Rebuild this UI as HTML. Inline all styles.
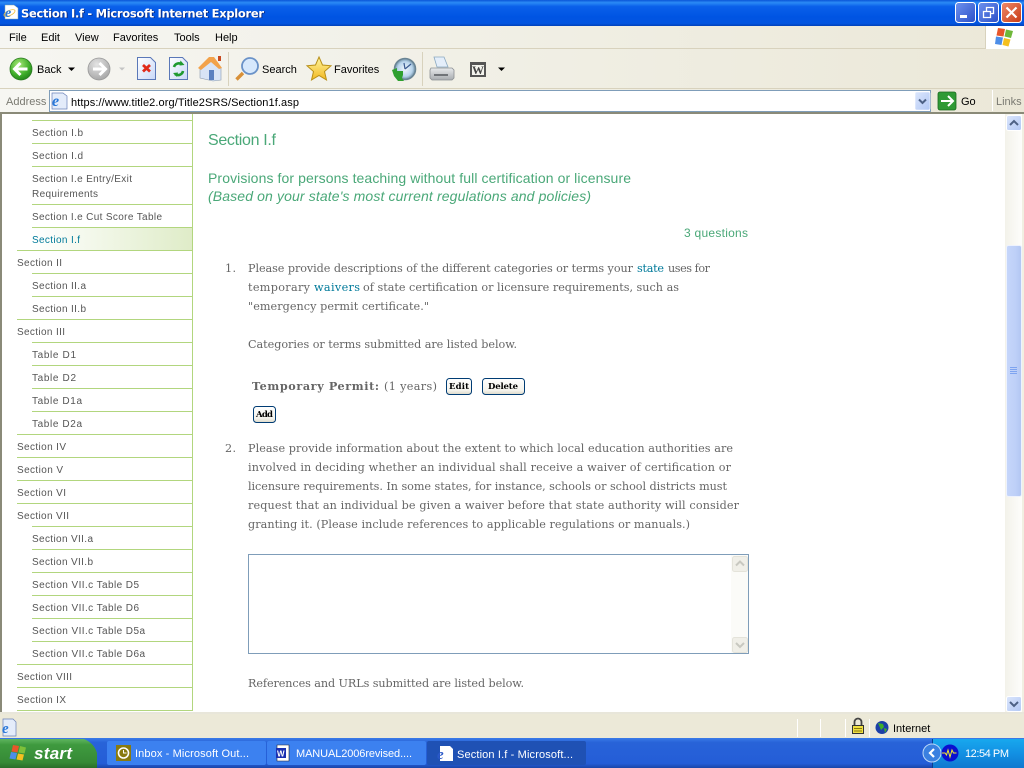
<!DOCTYPE html>
<html><head><meta charset="utf-8"><title>Section I.f - Microsoft Internet Explorer</title>
<style>
html,body{margin:0;padding:0;width:1024px;height:768px;overflow:hidden;background:#fff}
svg{display:block}
text{white-space:pre}
.s{font:11px "Liberation Sans",sans-serif;fill:#000}
.g{font-family:"Liberation Sans",sans-serif;fill:#4aa878}
</style></head><body>
<svg width="1024" height="768" viewBox="0 0 1024 768" xmlns="http://www.w3.org/2000/svg">
<defs>
<linearGradient id="tb" x1="0" y1="0" x2="0" y2="1"><stop offset="0" stop-color="#0a55d8"/><stop offset=".1" stop-color="#2b8bf5"/><stop offset=".25" stop-color="#0a60ea"/><stop offset=".65" stop-color="#0054e3"/><stop offset=".9" stop-color="#0355e0"/><stop offset="1" stop-color="#0241b8"/></linearGradient>
<linearGradient id="mn" x1="0" y1="0" x2="1" y2="0"><stop offset="0" stop-color="#f6f6f2"/><stop offset="1" stop-color="#ebe8d8"/></linearGradient>
<linearGradient id="task" x1="0" y1="0" x2="0" y2="1"><stop offset="0" stop-color="#3a7be8"/><stop offset=".15" stop-color="#2863d8"/><stop offset=".85" stop-color="#245dd7"/><stop offset="1" stop-color="#1a45a8"/></linearGradient>
<linearGradient id="st" x1="0" y1="0" x2="0" y2="1"><stop offset="0" stop-color="#5fb55f"/><stop offset=".2" stop-color="#3f9a3f"/><stop offset=".8" stop-color="#368a36"/><stop offset="1" stop-color="#2a6e2a"/></linearGradient>
<linearGradient id="tray" x1="0" y1="0" x2="0" y2="1"><stop offset="0" stop-color="#18a8ee"/><stop offset=".5" stop-color="#1290e3"/><stop offset="1" stop-color="#0f78cf"/></linearGradient>
<linearGradient id="act" x1="0" y1="0" x2="1" y2="0"><stop offset="0" stop-color="#fff"/><stop offset="1" stop-color="#dfecc8"/></linearGradient>
<linearGradient id="sb" x1="0" y1="0" x2="1" y2="0"><stop offset="0" stop-color="#f3f2ea"/><stop offset="1" stop-color="#fdfdfb"/></linearGradient>
<linearGradient id="th" x1="0" y1="0" x2="1" y2="0"><stop offset="0" stop-color="#c6d6fa"/><stop offset=".6" stop-color="#bed0f8"/><stop offset="1" stop-color="#b2c6f2"/></linearGradient>
<linearGradient id="btn" x1="0" y1="0" x2="0" y2="1"><stop offset="0" stop-color="#fff"/><stop offset=".75" stop-color="#f4f3ec"/><stop offset="1" stop-color="#dcd8c8"/></linearGradient>
<linearGradient id="wb" x1="0" y1="0" x2="1" y2="1"><stop offset="0" stop-color="#6f92ee"/><stop offset="1" stop-color="#2a4fc8"/></linearGradient>
<linearGradient id="wr" x1="0" y1="0" x2="1" y2="1"><stop offset="0" stop-color="#ee8a6a"/><stop offset="1" stop-color="#c83a14"/></linearGradient>
<radialGradient id="grn" cx=".4" cy=".3" r=".8"><stop offset="0" stop-color="#a8e878"/><stop offset=".6" stop-color="#3fae2a"/><stop offset="1" stop-color="#1c7a18"/></radialGradient>
<radialGradient id="gry" cx=".4" cy=".3" r=".8"><stop offset="0" stop-color="#e4e4e4"/><stop offset="1" stop-color="#a0a0a0"/></radialGradient>
<linearGradient id="sc" x1="0" y1="0" x2="1" y2="1"><stop offset="0" stop-color="#dbe6fc"/><stop offset="1" stop-color="#b2c8f5"/></linearGradient>
<linearGradient id="doc" x1="0" y1="0" x2="1" y2="1"><stop offset="0" stop-color="#ffffff"/><stop offset="1" stop-color="#c8d8f8"/></linearGradient>
<linearGradient id="star" x1="0" y1="0" x2="0" y2="1"><stop offset="0" stop-color="#fff6a0"/><stop offset="1" stop-color="#f2b820"/></linearGradient>
<linearGradient id="prn" x1="0" y1="0" x2="0" y2="1"><stop offset="0" stop-color="#e8eaec"/><stop offset="1" stop-color="#a8acb0"/></linearGradient>
<radialGradient id="clk" cx=".5" cy=".5" r=".5"><stop offset="0" stop-color="#f0f6fc"/><stop offset=".7" stop-color="#b8d4ec"/><stop offset="1" stop-color="#6a8aa0"/></radialGradient>
</defs>

<!-- title bar -->
<rect width="1024" height="26" fill="url(#tb)"/>
<path d="M5 5h9l4 3v11H5z" fill="#fff" stroke="#8aa" stroke-width=".5"/>
<ellipse cx="9.500" cy="13" rx="6" ry="2.500" fill="none" stroke="#f0c040" stroke-width=".8" transform="rotate(-25 9.500 13)"/>
<text x="5" y="17" font-family="Liberation Serif" font-style="italic" font-weight="bold" font-size="14" fill="#2a78d8">e</text>
<text x="22" y="18" font-family="DejaVu Sans" font-weight="bold" font-size="11.500" fill="#0a2a80" textLength="243">Section I.f - Microsoft Internet Explorer</text>
<text x="21" y="17.500" font-family="DejaVu Sans" font-weight="bold" font-size="11.500" fill="#fff" textLength="243">Section I.f - Microsoft Internet Explorer</text>
<g stroke="#fff" stroke-width="1">
<rect x="955.500" y="2.500" width="20" height="20" rx="3" fill="url(#wb)"/>
<rect x="978.500" y="2.500" width="20" height="20" rx="3" fill="url(#wb)"/>
<rect x="1001.500" y="2.500" width="20" height="20" rx="3" fill="url(#wr)"/>
</g>
<rect x="960" y="15" width="7" height="3" fill="#fff"/>
<path d="M983.500 11.500h7v6h-7zM986.500 11v-3.500h7v6h-3" fill="none" stroke="#fff" stroke-width="1.300"/>
<path d="M1006.500 7.500l10 10M1016.500 7.500l-10 10" stroke="#fff" stroke-width="2.200"/>

<!-- menu -->
<rect y="26" width="1024" height="23" fill="url(#mn)"/>
<rect y="48" width="985" height="1" fill="#d8d2bd"/>
<rect x="985" y="26" width="39" height="23" fill="#fff"/>
<rect x="985" y="26" width="1" height="23" fill="#d8d2bd"/>
<path d="M998 28l7 1-1.500 7.500-7-1z" fill="#e8562a"/><path d="M1006 29.500l7 1.500-2 7-6.500-1.500z" fill="#6fb83a"/><path d="M996 36.500l7 1-1.500 7.500-6.500-1z" fill="#4d8ee8"/><path d="M1004 38l6.500 1.500-2 7-6-1.500z" fill="#f5c020"/>
<text class="s" x="9" y="41">File</text>
<text class="s" x="41" y="41">Edit</text>
<text class="s" x="75" y="41">View</text>
<text class="s" x="113" y="41">Favorites</text>
<text class="s" x="174" y="41">Tools</text>
<text class="s" x="215" y="41">Help</text>

<!-- toolbar -->
<rect y="49" width="1024" height="40" fill="url(#mn)"/>
<rect y="88" width="1024" height="1" fill="#d8d2bd"/>
<circle cx="21" cy="69" r="11" fill="url(#grn)" stroke="#2a7a20" stroke-width=".8"/>
<path d="M27.500 69H15M20.500 63l-6 6 6 6" fill="none" stroke="#fff" stroke-width="3"/>
<text class="s" x="37" y="73">Back</text>
<path d="M68 67.500h7l-3.500 3.500z" fill="#000"/>
<circle cx="99" cy="69" r="11" fill="url(#gry)" stroke="#999" stroke-width=".8"/>
<path d="M93 69h12M99.500 63l6 6-6 6" fill="none" stroke="#fff" stroke-width="3"/>
<path d="M119 67.500h6l-3 3z" fill="#c4c4c4"/>
<path d="M137.500 57.500h13l5 5v17h-18z" fill="url(#doc)" stroke="#5a78b8"/>
<path d="M143 65l7 6.500M150 65l-7 6.500" stroke="#e02a1a" stroke-width="2.800"/>
<path d="M169.500 57.500h13l5 5v17h-18z" fill="url(#doc)" stroke="#5a78b8"/>
<path d="M174 67a5 5 0 0 1 8-2.500M183 71a5 5 0 0 1-8 3" fill="none" stroke="#1f9a30" stroke-width="2.600"/>
<path d="M180.500 60.500l4 4.500-5 .5zM177 77l-4-4 5-.5z" fill="#1f9a30"/>
<path d="M200 68l10-9 11 9v12l-8 1-13-3z" fill="#d8e4f6" stroke="#8a9ab0" stroke-width=".6"/>
<path d="M198 68l11-11 5 0 8 11-3 1-8-7-10 8z" fill="#f2a24a"/>
<rect x="218" y="56" width="3" height="5" fill="#c84a20"/>
<rect x="209" y="70" width="5" height="10" fill="#5a80c0"/>
<rect x="228" y="52" width="1" height="34" fill="#d8d2bd"/>
<circle cx="250" cy="66" r="8" fill="#d6e8fc" stroke="#6a92c8" stroke-width="1.800"/>
<path d="M243 73l-6.500 6.500" stroke="#d89038" stroke-width="3.400"/>
<text class="s" x="262" y="73">Search</text>
<path d="M319 57l3.500 8 8.500.8-6.500 5.700 2 8.500-7.500-4.500-7.500 4.500 2-8.500-6.500-5.700 8.500-.8z" fill="url(#star)" stroke="#b89018" stroke-width="1"/>
<text class="s" x="334" y="73">Favorites</text>
<circle cx="405" cy="69" r="10.500" fill="url(#clk)" stroke="#6a8494" stroke-width="1.600"/>
<path d="M405 69l6-5M405 69l-1-6" stroke="#3a5a90" stroke-width="1.200"/>
<path d="M392 70l5-2 0 3h6v4l-1 3 2 3-6 0-4-5z" fill="#2fa030"/>
<rect x="422" y="52" width="1" height="34" fill="#d8d2bd"/>
<path d="M434 57h10l4 10h-11z" fill="#e4eefa" stroke="#8aa8c0" stroke-width=".8"/>
<path d="M431 68h21l2 2v8l-2 2h-20l-2-2v-8z" fill="url(#prn)" stroke="#8a8e92" stroke-width=".8"/>
<rect x="434" y="74" width="14" height="2" fill="#707478"/>
<rect x="470" y="62" width="16" height="15" fill="#555"/>
<rect x="472" y="65" width="12" height="10" fill="#f4f4ee"/>
<text x="472" y="74" font-family="Liberation Serif" font-weight="bold" font-size="12" fill="#444" textLength="12">W</text>
<path d="M498 67.500h7l-3.500 3.500z" fill="#000"/>

<!-- address bar -->
<rect y="89" width="1024" height="24" fill="url(#mn)"/>
<text x="6" y="105" font-family="Liberation Sans" font-size="11" fill="#7a7a72">Address</text>
<rect x="49.500" y="90.500" width="881" height="21" fill="#fff" stroke="#7f9db9"/>
<path d="M52 93h11l4 3v13H52z" fill="#e4ecfa" stroke="#6a80b8" stroke-width=".7"/>
<text x="52" y="106" font-family="Liberation Serif" font-style="italic" font-weight="bold" font-size="16" fill="#2a78d8">e</text>
<text x="71" y="106" font-family="Liberation Sans" font-size="11" fill="#000" textLength="228">https://www.title2.org/Title2SRS/Section1f.asp</text>
<rect x="915" y="92" width="15" height="18" rx="1.500" fill="url(#sc)" stroke="#fff" stroke-width=".6"/>
<path d="M919 99.500l3.500 3.500 3.500-3.500" fill="none" stroke="#4d6185" stroke-width="2"/>
<rect x="938" y="92" width="18" height="18" rx="2" fill="#2f9a35" stroke="#1c6a20" stroke-width=".8"/>
<path d="M941 101h11M948 96l5 5-5 5" fill="none" stroke="#fff" stroke-width="2"/>
<text class="s" x="961" y="105">Go</text>
<rect x="992" y="90" width="1" height="21" fill="#fff"/>
<text x="996" y="105" font-family="Liberation Sans" font-size="11" fill="#7a7a72">Links</text>

<!-- content -->
<rect x="0" y="112" width="1024" height="602" fill="#fff"/>
<rect x="0" y="112" width="1024" height="2" fill="#8a8a78"/>
<rect x="0" y="112" width="2" height="602" fill="#8a8a78"/>
<rect x="0" y="712" width="1024" height="2" fill="#e8e6da"/>

<!-- sidebar -->
<rect x="32" y="228" width="160" height="22" fill="url(#act)"/>
<g fill="#b2d67e">
<rect x="192" y="114" width="1" height="597"/>
<rect x="32" y="120" width="160" height="1"/><rect x="32" y="143" width="160" height="1"/><rect x="32" y="166" width="160" height="1"/><rect x="32" y="204" width="160" height="1"/><rect x="32" y="227" width="160" height="1"/>
<rect x="17" y="250" width="175" height="1"/><rect x="32" y="273" width="160" height="1"/><rect x="32" y="296" width="160" height="1"/>
<rect x="17" y="319" width="175" height="1"/><rect x="32" y="342" width="160" height="1"/><rect x="32" y="365" width="160" height="1"/><rect x="32" y="388" width="160" height="1"/><rect x="32" y="411" width="160" height="1"/>
<rect x="17" y="434" width="175" height="1"/><rect x="17" y="457" width="175" height="1"/><rect x="17" y="480" width="175" height="1"/><rect x="17" y="503" width="175" height="1"/>
<rect x="32" y="526" width="160" height="1"/><rect x="32" y="549" width="160" height="1"/><rect x="32" y="572" width="160" height="1"/><rect x="32" y="595" width="160" height="1"/><rect x="32" y="618" width="160" height="1"/><rect x="32" y="641" width="160" height="1"/>
<rect x="17" y="664" width="175" height="1"/><rect x="17" y="687" width="175" height="1"/><rect x="17" y="710" width="175" height="1"/>
</g>
<g font-family="Liberation Sans" font-size="10" fill="#555">
<text x="32" y="136" textLength="51">Section I.b</text>
<text x="32" y="159" textLength="51">Section I.d</text>
<text x="32" y="182" textLength="100">Section I.e Entry/Exit</text>
<text x="32" y="197" textLength="66">Requirements</text>
<text x="32" y="220" textLength="130">Section I.e Cut Score Table</text>
<text x="32" y="243" textLength="48" fill="#007a9a">Section I.f</text>
<text x="17" y="266" textLength="45">Section II</text>
<text x="32" y="289" textLength="54">Section II.a</text>
<text x="32" y="312" textLength="54">Section II.b</text>
<text x="17" y="335" textLength="48">Section III</text>
<text x="32" y="358" textLength="44">Table D1</text>
<text x="32" y="381" textLength="44">Table D2</text>
<text x="32" y="404" textLength="50">Table D1a</text>
<text x="32" y="427" textLength="50">Table D2a</text>
<text x="17" y="450" textLength="49">Section IV</text>
<text x="17" y="473" textLength="46">Section V</text>
<text x="17" y="496" textLength="49">Section VI</text>
<text x="17" y="519" textLength="52">Section VII</text>
<text x="32" y="542" textLength="61">Section VII.a</text>
<text x="32" y="565" textLength="61">Section VII.b</text>
<text x="32" y="588" textLength="107">Section VII.c Table D5</text>
<text x="32" y="611" textLength="107">Section VII.c Table D6</text>
<text x="32" y="634" textLength="113">Section VII.c Table D5a</text>
<text x="32" y="657" textLength="113">Section VII.c Table D6a</text>
<text x="17" y="680" textLength="55">Section VIII</text>
<text x="17" y="703" textLength="49">Section IX</text>
</g>

<!-- main text -->
<text class="g" x="208" y="145" font-size="16" textLength="68">Section I.f</text>
<text class="g" x="208" y="183" font-size="14" textLength="423">Provisions for persons teaching without full certification or licensure</text>
<text class="g" x="208" y="201" font-size="14" font-style="italic" textLength="383">(Based on your state's most current regulations and policies)</text>
<text class="g" x="684" y="237" font-size="12" textLength="64">3 questions</text>

<g font-family="DejaVu Serif" font-size="11.200" fill="#666">
<text x="225" y="272" textLength="11">1.</text>
<text x="248" y="272" textLength="385">Please provide descriptions of the different categories or terms your</text>
<text x="637" y="272" textLength="27" fill="#007a9a">state</text>
<text x="668" y="272" textLength="42">uses for</text>
<text x="248" y="291" textLength="62">temporary</text>
<text x="314" y="291" textLength="46" fill="#007a9a">waivers</text>
<text x="363" y="291" textLength="316">of state certification or licensure requirements, such as</text>
<text x="248" y="310" textLength="181">"emergency permit certificate."</text>
<text x="248" y="348" textLength="269">Categories or terms submitted are listed below.</text>
<text x="252" y="390" textLength="127" font-weight="bold">Temporary Permit:</text>
<text x="384" y="390" textLength="53">(1 years)</text>
<text x="225" y="452" textLength="11">2.</text>
<text x="248" y="452" textLength="485">Please provide information about the extent to which local education authorities are</text>
<text x="248" y="471" textLength="483">involved in deciding whether an individual shall receive a waiver of certification or</text>
<text x="248" y="490" textLength="479">licensure requirements. In some states, for instance, schools or school districts must</text>
<text x="248" y="509" textLength="491">request that an individual be given a waiver before that state authority will consider</text>
<text x="248" y="528" textLength="442">granting it. (Please include references to applicable regulations or manuals.)</text>
<text x="248" y="687" textLength="276">References and URLs submitted are listed below.</text>
</g>

<!-- buttons -->
<g fill="url(#btn)" stroke="#003c74" stroke-width="1">
<rect x="446.500" y="378.500" width="25" height="16" rx="3"/>
<rect x="482.500" y="378.500" width="42" height="16" rx="3"/>
<rect x="253.500" y="406.500" width="22" height="16" rx="3"/>
</g>
<g font-family="DejaVu Serif" font-size="8.500" font-weight="bold" fill="#000">
<text x="449" y="389" textLength="20">Edit</text>
<text x="488" y="389" textLength="30">Delete</text>
<text x="256" y="417" textLength="17">Add</text>
</g>

<!-- textarea -->
<rect x="248.500" y="554.500" width="500" height="99" fill="#fff" stroke="#7f9db9"/>
<rect x="731" y="555" width="17" height="98" fill="#fbfbf8"/>
<rect x="732.500" y="556.500" width="15" height="15" rx="2" fill="#f0efe8" stroke="#e4e3da"/>
<path d="M736 565.500l4-4 4 4" fill="none" stroke="#c8c8c0" stroke-width="2"/>
<rect x="732.500" y="637.500" width="15" height="15" rx="2" fill="#f0efe8" stroke="#e4e3da"/>
<path d="M736 643l4 4 4-4" fill="none" stroke="#c8c8c0" stroke-width="2"/>

<!-- page scrollbar -->
<rect x="1005" y="114" width="17" height="598" fill="url(#sb)"/>
<rect x="1022" y="114" width="2" height="598" fill="#f1efe2"/>
<rect x="1006.500" y="115.500" width="15" height="15" rx="2" fill="url(#sc)" stroke="#fff"/>
<path d="M1010 125l4-4 4 4" fill="none" stroke="#4d6185" stroke-width="2"/>
<rect x="1006.500" y="696.500" width="15" height="15" rx="2" fill="url(#sc)" stroke="#fff"/>
<path d="M1010 702l4 4 4-4" fill="none" stroke="#4d6185" stroke-width="2"/>
<rect x="1006.500" y="245.500" width="15" height="251" rx="2" fill="url(#th)" stroke="#eef2fd"/>
<g fill="#7ea4f0"><rect x="1010" y="367" width="7" height="1"/><rect x="1010" y="369" width="7" height="1"/><rect x="1010" y="371" width="7" height="1"/><rect x="1010" y="373" width="7" height="1"/></g>

<!-- status bar -->
<rect y="714" width="1024" height="27" fill="#ece9d8"/>
<path d="M3 719h10l3 3v14H3z" fill="#e4ecfa" stroke="#6a80b8" stroke-width=".7"/>
<text x="2" y="733" font-family="Liberation Serif" font-style="italic" font-weight="bold" font-size="15" fill="#2a78d8">e</text>
<g fill="#fff"><rect x="797" y="719" width="1" height="18"/><rect x="820" y="719" width="1" height="18"/><rect x="845" y="719" width="1" height="18"/><rect x="869" y="719" width="1" height="18"/></g>
<path d="M854.500 726v-4a3.500 3.500 0 0 1 7 0v4" fill="none" stroke="#444" stroke-width="1.800"/>
<rect x="852.500" y="725.500" width="11" height="8" fill="#f0e040" stroke="#333"/>
<path d="M854 728.500h8M854 731h8" stroke="#887a10"/>
<circle cx="882" cy="727.500" r="6.500" fill="#1c3fa8"/><path d="M878 723l5 1 1 3-3 3zM884 728l3 1-2 4z" fill="#3fae2a"/>
<text class="s" x="893" y="732">Internet</text>

<!-- taskbar -->
<rect y="738" width="1024" height="30" fill="url(#task)"/>
<path d="M0 739h84q10 4 13 14v15H0z" fill="url(#st)"/>
<path d="M13 745l6 1-1.500 6.500-6-1z" fill="#e8562a"/><path d="M20 746l6 1.500-1.500 6-6-1z" fill="#7ec03a"/><path d="M11 752l6 1-1.500 6.500-6-1z" fill="#4d8ee8"/><path d="M18 753.500l6 1-1.500 6-6-1z" fill="#f5c020"/>
<text x="34" y="759" font-family="Liberation Sans" font-style="italic" font-weight="bold" font-size="17" fill="#fff" textLength="38">start</text>
<rect x="107" y="741" width="159" height="24" rx="2" fill="#3c81f0"/>
<rect x="267" y="741" width="159" height="24" rx="2" fill="#3c81f0"/>
<rect x="427" y="741" width="159" height="24" rx="2" fill="#1f51b4"/>
<rect x="116" y="745" width="15" height="16" fill="#887a10"/><circle cx="123.500" cy="753" r="5" fill="none" stroke="#fff" stroke-width="1.600"/><path d="M123.500 750v3h3" stroke="#fff" fill="none"/>
<path d="M277 745h12v16h-12z" fill="#fff" stroke="#223" stroke-width=".6"/><rect x="276" y="748" width="10" height="10" fill="#1a2fb0"/><text x="277" y="756.500" font-family="Liberation Sans" font-weight="bold" font-size="8" fill="#fff">W</text>
<path d="M440 746h10l3 3v12h-13z" fill="#fff"/><text x="437" y="759" font-family="Liberation Serif" font-style="italic" font-weight="bold" font-size="15" fill="#2a58c8">e</text>
<g font-family="Liberation Sans" font-size="11" fill="#fff">
<text x="135" y="757" textLength="114">Inbox - Microsoft Out...</text>
<text x="296" y="757" textLength="116">MANUAL2006revised....</text>
<text x="457" y="758" textLength="116">Section I.f - Microsoft...</text>
</g>
<rect x="932" y="739" width="92" height="29" fill="url(#tray)"/>
<rect x="932" y="739" width="1" height="29" fill="#0a3e90"/>
<circle cx="932" cy="753" r="9" fill="#3a80e0" stroke="#bcd8f8" stroke-width="1"/>
<path d="M934 749l-4 4 4 4" fill="none" stroke="#fff" stroke-width="2.200"/>
<circle cx="950" cy="753" r="8.500" fill="#0a10d0"/>
<path d="M942 753h3l1.500 2 1.500-5 2 7 2-7 1.500 3h3" fill="none" stroke="#f5e830" stroke-width="1"/>
<text x="965" y="757" font-family="Liberation Sans" font-size="11" fill="#fff" textLength="44">12:54 PM</text>
</svg>
</body></html>
